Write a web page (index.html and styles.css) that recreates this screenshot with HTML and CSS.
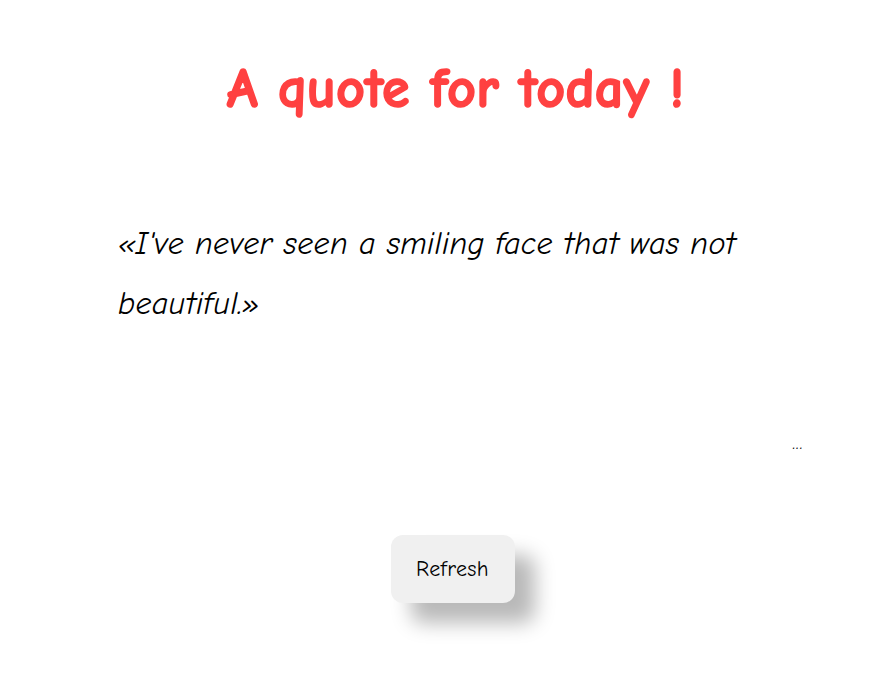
FILE: index.html
```html
<!DOCTYPE html>
<html lang="en">
<head>
<meta charset="utf-8">
<title>A quote for today</title>
<link rel="stylesheet" href="styles.css">
</head>
<body>
<main class="page">
  <h1 class="title">A quote for today !</h1>
  <p class="quote">«I've never seen a smiling face that was not beautiful.»</p>
  <p class="author">...</p>
  <div class="actions">
    <button class="refresh" type="button">Refresh</button>
  </div>
</main>
</body>
</html>
```

FILE: styles.css
```css
html, body {
  margin: 0;
  padding: 0;
  background: #ffffff;
}

body {
  font-family: "Comic Sans MS", "Comic Neue", "Comic Relief", "Chalkboard SE", "DejaVu Sans", sans-serif;
  color: #000;
  min-height: 697px;
}

.page {
  margin: 0 96px 0 118px;
  padding-bottom: 60px;
  display: flex;
  flex-direction: column;
}

.title {
  margin: 52px 0 0;
  padding-left: 6px;
  text-align: center;
  font-size: 56px;
  font-weight: 700;
  color: #ff4141;
  line-height: 74px;
  letter-spacing: 0.2px;
  -webkit-text-stroke: 1.6px #ff4141;
}

.quote {
  margin: 88px 0 0;
  font-size: 32px;
  font-style: italic;
  line-height: 60px;
  letter-spacing: 0.3px;
  max-width: 660px;
}

.author {
  margin: 100px -16px 0 0;
  text-align: right;
  font-size: 17px;
  line-height: 20px;
  letter-spacing: 1px;
}

.actions {
  margin-top: 81px;
  display: flex;
  justify-content: center;
}

.refresh {
  width: 124px;
  height: 68px;
  border: none;
  border-radius: 12px;
  background: #f0f0f0;
  font-family: inherit;
  font-size: 22px;
  letter-spacing: 0.4px;
  color: #000;
  box-shadow: 20px 20px 20px rgba(0, 0, 0, 0.28);
  cursor: pointer;
}
```
